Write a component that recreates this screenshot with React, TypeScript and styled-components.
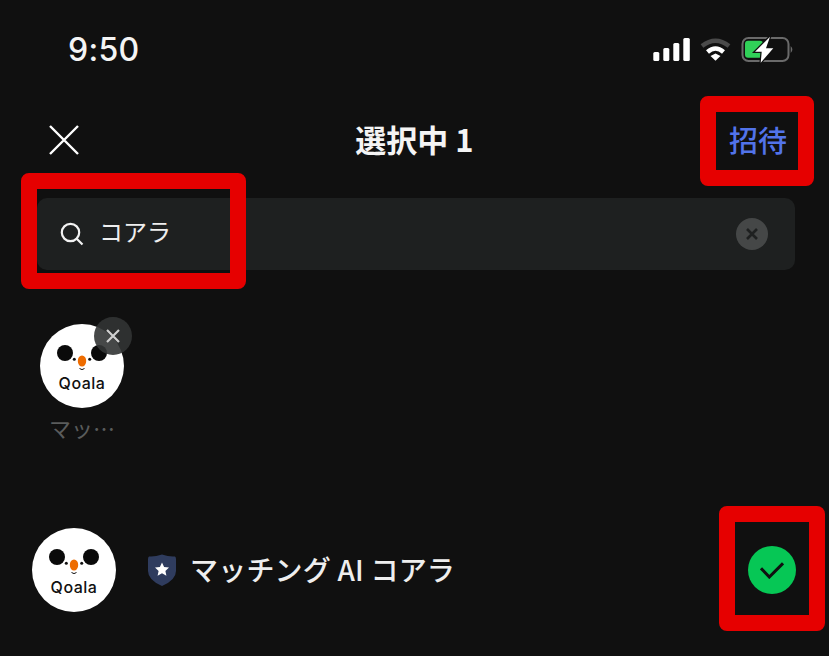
import React from "react";
import styled, { createGlobalStyle } from "styled-components";

const Global = createGlobalStyle`
  html, body { margin: 0; padding: 0; background: #101010; }
  #root { width: 829px; height: 656px; overflow: hidden; }
`;

const JP = `"Noto Sans CJK JP", Inter, sans-serif`;

const Page = styled.div`
  position: relative;
  width: 829px;
  height: 656px;
  background: #101010;
  font-family: ${JP};
  color: #fff;
  overflow: hidden;
`;

const StatusBar = styled.div`
  height: 88px;
  padding: 12px 34px 0 68px;
  box-sizing: border-box;
  display: flex;
  align-items: flex-start;
  justify-content: space-between;
`;

const Time = styled.div`
  font-family: Inter, sans-serif;
  font-size: 32px;
  line-height: 76px;
  height: 76px;
  font-weight: 500;
  letter-spacing: 0.3px;
  color: #f4f4f4;
`;

const StatusIcons = styled.svg`
  width: 143px;
  height: 30px;
  margin-top: 23px;
  overflow: visible;
`;

const Nav = styled.div`
  height: 104px;
  padding: 0 42px 0 48px;
  box-sizing: border-box;
  display: flex;
  align-items: center;
  justify-content: space-between;
  position: relative;
  margin-bottom: 6px;
`;

const NavIcon = styled.svg`
  width: 32px;
  height: 32px;
`;

const Title = styled.div`
  position: absolute;
  left: 0;
  right: 0;
  top: 0;
  line-height: 102px;
  text-align: center;
  font-size: 31px;
  font-weight: 700;
  color: #f4f4f4;
`;

const Invite = styled.div`
  font-size: 29px;
  line-height: 102px;
  margin-bottom: 2px;
  font-weight: 500;
  color: #5273ea;
`;

const SearchBar = styled.div`
  margin: 0 34px 0 37px;
  height: 72px;
  border-radius: 10px;
  background: #1e2020;
  display: flex;
  align-items: center;
  padding: 0 27px 0 23px;
  gap: 15px;
`;

const SearchIcon = styled.svg`
  width: 24px;
  height: 24px;
`;

const SearchText = styled.div`
  flex: 1;
  font-size: 24px;
  line-height: 36px;
  color: #eeeeee;
  margin-bottom: 6px;
`;

const ClearBtn = styled.div`
  width: 32px;
  height: 32px;
  border-radius: 50%;
  background: #454747;
  display: flex;
  align-items: center;
  justify-content: center;
`;

const SelectedArea = styled.div`
  height: 258px;
  padding: 54px 0 0 40px;
  box-sizing: border-box;
`;

const SelectedItem = styled.div`
  position: relative;
  width: 84px;
`;

const RemoveBadge = styled.div`
  position: absolute;
  left: 54px;
  top: -7px;
  width: 38px;
  height: 38px;
  border-radius: 50%;
  background: rgba(50, 52, 52, 0.9);
  display: flex;
  align-items: center;
  justify-content: center;
`;

const SelectedLabel = styled.div`
  margin-top: 3px;
  font-size: 22px;
  line-height: 32px;
  text-align: center;
  color: #5a5c5c;
  white-space: nowrap;
`;

const Row = styled.div`
  height: 84px;
  padding: 0 33px 0 32px;
  display: flex;
  align-items: center;
`;

const BadgeIcon = styled.svg`
  width: 28px;
  height: 32px;
  margin-left: 32px;
  margin-right: 14px;
`;

const Name = styled.div`
  flex: 1;
  font-size: 28px;
  line-height: 40px;
  margin-bottom: 2px;
  font-weight: 500;
  color: #eeeeee;
  letter-spacing: 0.2px;
`;

const Check = styled.div`
  width: 48px;
  height: 48px;
  border-radius: 50%;
  background: #06c755;
  display: flex;
  align-items: center;
  justify-content: center;
`;

const Highlight = styled.div<{ $l: number; $t: number; $w: number; $h: number }>`
  position: absolute;
  left: ${p => p.$l}px;
  top: ${p => p.$t}px;
  width: ${p => p.$w}px;
  height: ${p => p.$h}px;
  box-sizing: border-box;
  border: 16px solid #e60000;
  border-radius: 8px;
`;

const AvatarSvg = styled.svg`
  width: 84px;
  height: 84px;
  display: block;
  flex: none;
`;

const AvatarText = styled.text`
  font-family: Inter, sans-serif;
  font-size: 16px;
  font-weight: 500;
  letter-spacing: 0.5px;
  fill: #111;
`;

const Avatar = () => (
  <AvatarSvg viewBox="0 0 84 84">
    <circle cx="42" cy="42" r="42" fill="#fff" />
    <circle cx="25" cy="29" r="8" fill="#0a0a0a" />
    <circle cx="59" cy="29" r="8" fill="#0a0a0a" />
    <circle cx="34.3" cy="35.3" r="1.5" fill="#111" />
    <circle cx="49.7" cy="35.3" r="1.5" fill="#111" />
    <ellipse cx="42" cy="37" rx="4.2" ry="5.6" fill="#ee6c00" />
    <path d="M39.5 44.5 q2.5 2.2 5 0" stroke="#111" strokeWidth="1" fill="none" />
    <AvatarText x="42" y="64.5" textAnchor="middle">Qoala</AvatarText>
  </AvatarSvg>
);

export default function App() {
  return (
    <Page>
      <Global />
      <StatusBar>
        <Time>9:50</Time>
        <StatusIcons viewBox="0 0 143 30">
          <rect x="1.3" y="17" width="6" height="9" rx="1.5" fill="#fff" />
          <rect x="11.3" y="13" width="6" height="13" rx="1.5" fill="#fff" />
          <rect x="21.3" y="8" width="6" height="18" rx="1.5" fill="#fff" />
          <rect x="31.3" y="3" width="6.5" height="23" rx="1.5" fill="#fff" />
          <path d="M50 11 Q63.5 0.6 77 11" stroke="#4a4a4a" strokeWidth="4.5" fill="none" />
          <path d="M55.5 17 Q63.5 10 71.5 17" stroke="#fff" strokeWidth="4.5" fill="none" />
          <path d="M58.5 21 L63.5 18.5 L68.5 21 L63.5 25.7 Z" fill="#fff" />
          <rect x="90.5" y="3" width="46" height="23" rx="6" stroke="#6a6a6a" strokeWidth="2" fill="none" />
          <rect x="93" y="5.7" width="18" height="17" rx="3" fill="#30d158" />
          <path d="M138.7 11 q3.3 3.5 0 7 Z" fill="#6a6a6a" />
          <path
            d="M118 1.7 L103 16.7 L109.7 16.7 L108.7 27.7 L121.3 13.3 L114 13.3 Z"
            fill="#fff"
            stroke="#101010"
            strokeWidth="2.5"
            paintOrder="stroke"
          />
        </StatusIcons>
      </StatusBar>
      <Nav>
        <NavIcon viewBox="0 0 32 32">
          <path d="M2 2 L30 30 M30 2 L2 30" stroke="#fff" strokeWidth="2.4" />
        </NavIcon>
        <Title>選択中 1</Title>
        <Invite>招待</Invite>
      </Nav>
      <SearchBar>
        <SearchIcon viewBox="0 0 24 24">
          <circle cx="10.5" cy="10.5" r="8.7" stroke="#f2f2f2" strokeWidth="2.2" fill="none" />
          <path d="M17 17 L22.5 22.5" stroke="#f2f2f2" strokeWidth="2.2" />
        </SearchIcon>
        <SearchText>コアラ</SearchText>
        <ClearBtn>
          <svg width="14" height="14" viewBox="0 0 14 14">
            <path d="M2 2 L12 12 M12 2 L2 12" stroke="#1e2020" strokeWidth="2.6" />
          </svg>
        </ClearBtn>
      </SearchBar>
      <SelectedArea>
        <SelectedItem>
          <Avatar />
          <RemoveBadge>
            <svg width="16" height="16" viewBox="0 0 16 16">
              <path d="M2 2 L14 14 M14 2 L2 14" stroke="#cfcfcf" strokeWidth="2.2" />
            </svg>
          </RemoveBadge>
          <SelectedLabel>マッ…</SelectedLabel>
        </SelectedItem>
      </SelectedArea>
      <Row>
        <Avatar />
        <BadgeIcon viewBox="0 0 28 32">
          <path d="M14 0.5 Q21 3 27 2.5 Q28 3 28 5 L28 17 Q28 26 14 32 Q0 26 0 17 L0 5 Q0 3 1 2.5 Q7 3 14 0.5 Z" fill="#2f3c5e" />
          <path d="M14 8.5 L16.1 13 L21 13.6 L17.4 16.9 L18.4 21.8 L14 19.3 L9.6 21.8 L10.6 16.9 L7 13.6 L11.9 13 Z" fill="#fff" />
        </BadgeIcon>
        <Name>マッチング AI コアラ</Name>
        <Check>
          <svg width="24" height="18" viewBox="0 0 24 18">
            <path d="M1 7.3 L9.3 16 L23 2.3" stroke="#101010" strokeWidth="3" fill="none" />
          </svg>
        </Check>
      </Row>
      <Highlight $l={21} $t={173} $w={225} $h={116} />
      <Highlight $l={700} $t={96} $w={114} $h={90} />
      <Highlight $l={719} $t={506} $w={106} $h={125} />
    </Page>
  );
}
